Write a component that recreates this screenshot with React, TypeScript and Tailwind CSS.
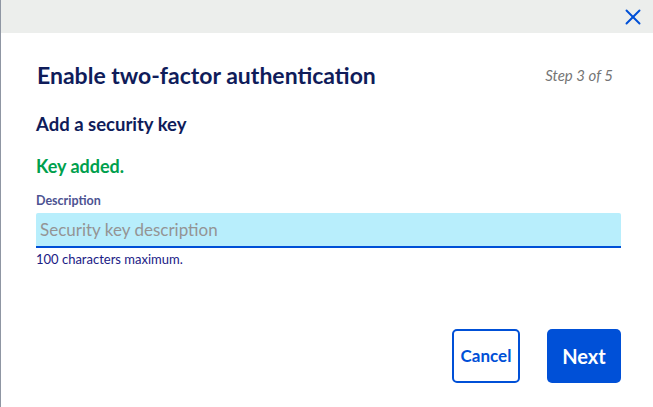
import { X } from "lucide-react";

export default function App() {
  return (
    <div
      className="w-[653px] h-[407px] bg-white border-l border-[#8f96a3] flex flex-col overflow-hidden"
      style={{ fontFamily: "Lato, 'Open Sans', sans-serif" }}
    >
      <div className="h-[33px] bg-[#eceeec] flex items-center justify-end pr-[7px] shrink-0">
        <X className="w-[26px] h-[26px] text-[#0050d7]" strokeWidth={1.8} />
      </div>

      <div className="flex-1 flex flex-col pl-[35px] pr-[32px]">
        <div className="flex items-center justify-between mt-[30px] h-[24px]">
          <h1 className="pl-[1px] text-[23px] font-bold text-[#0f1c5a] leading-none">
            Enable two-factor authentication
          </h1>
          <span className="text-[15px] italic text-[#757575] pr-[8px]">Step 3 of 5</span>
        </div>

        <h2 className="mt-[28px] text-[18.5px] font-bold text-[#0f1c5a] leading-none">
          Add a security key
        </h2>

        <p className="mt-[23px] text-[18px] font-bold text-[#00a04d] leading-none">Key added.</p>

        <label className="mt-[20px] text-[12.5px] font-bold text-[#4d5392] leading-none">
          Description
        </label>
        <div className="mt-[6px] h-[35px] bg-[#b8eefc] border-b-2 border-[#0050d7] rounded-t-[2px] flex items-center px-[4px]">
          <span className="text-[17px] text-[#949494]">Security key description</span>
        </div>
        <p className="mt-[5px] text-[13px] text-[#1a2085] leading-none">100 characters maximum.</p>

        <div className="flex justify-end gap-[27px] mt-[63px]">
          <button className="w-[68px] h-[54px] rounded-[5px] border-2 border-[#0050d7] text-[#0050d7] text-[17px] font-bold bg-white">
            Cancel
          </button>
          <button className="w-[74px] h-[54px] rounded-[5px] bg-[#0050d7] text-white text-[20px] font-bold">
            Next
          </button>
        </div>
      </div>
    </div>
  );
}
